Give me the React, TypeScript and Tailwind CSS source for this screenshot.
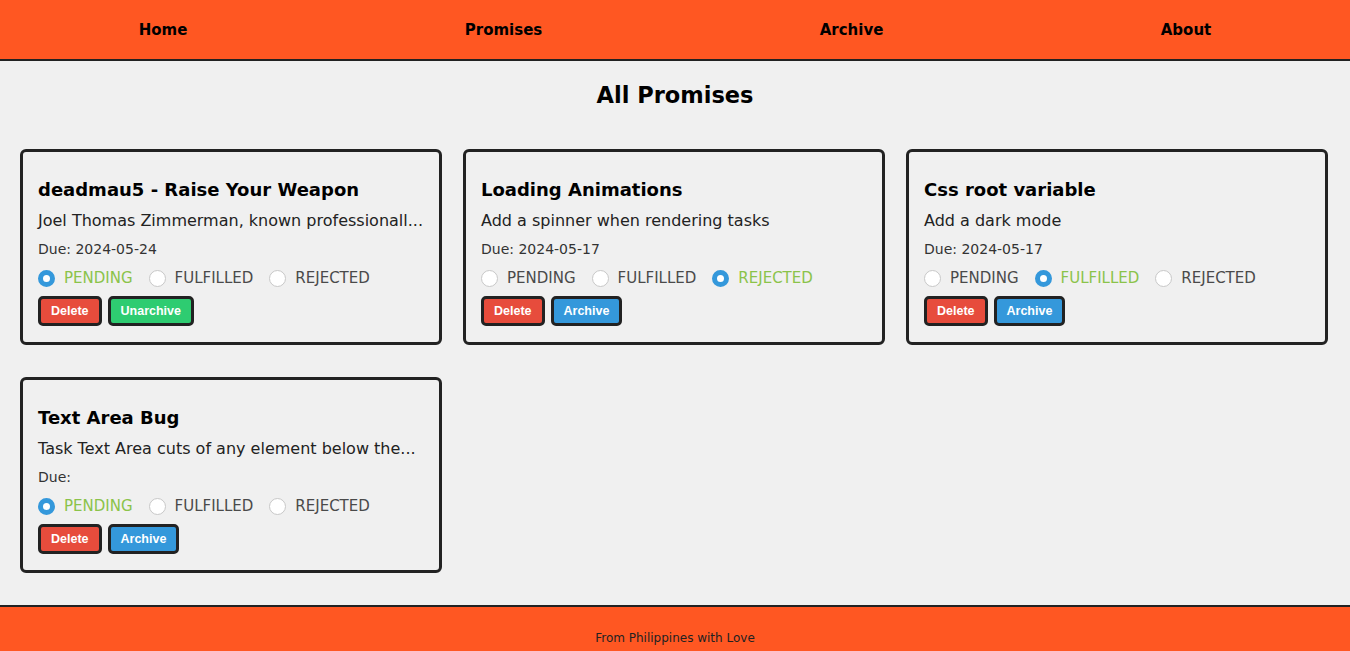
type Status = "PENDING" | "FULFILLED" | "REJECTED";

type Promise = {
    title: string;
    description: string;
    due: string;
    status: Status;
    archived: boolean;
};

const promises: Promise[] = [
    {
        title: "deadmau5 - Raise Your Weapon",
        description: "Joel Thomas Zimmerman, known professionall...",
        due: "2024-05-24",
        status: "PENDING",
        archived: true,
    },
    {
        title: "Loading Animations",
        description: "Add a spinner when rendering tasks",
        due: "2024-05-17",
        status: "REJECTED",
        archived: false,
    },
    {
        title: "Css root variable",
        description: "Add a dark mode",
        due: "2024-05-17",
        status: "FULFILLED",
        archived: false,
    },
    {
        title: "Text Area Bug",
        description: "Task Text Area cuts of any element below the...",
        due: "",
        status: "PENDING",
        archived: false,
    },
];

const statuses: Status[] = ["PENDING", "FULFILLED", "REJECTED"];

function Radio({ label, checked }: { label: Status; checked: boolean }) {
    return (
        <label className="flex items-center gap-[9px]">
            {checked ? (
                <span className="h-[17px] w-[17px] rounded-full border-[5px] border-[#3498db] bg-white" />
            ) : (
                <span className="h-[17px] w-[17px] rounded-full border border-[#c8c8c8] bg-white" />
            )}
            <span className={checked ? "text-[#8bc34a]" : "text-[#4a4a4a]"}>
                {label}
            </span>
        </label>
    );
}

function PromiseCard({ item }: { item: Promise }) {
    return (
        <div className="rounded-[6px] border-[3px] border-[#222] px-[15px] pb-[16px] pt-[23px]">
            <h2 className="text-[18px] font-bold leading-[30px] text-black">
                {item.title}
            </h2>
            <p className="mt-[4px] text-[16px] leading-[24px] text-[#222]">
                {item.description}
            </p>
            <p className="mt-[6px] text-[14px] leading-[20px] text-[#333]">
                Due: {item.due}
            </p>
            <div className="mt-[9px] flex gap-[16px] text-[15px] leading-[20px]">
                {statuses.map((s) => (
                    <Radio key={s} label={s} checked={item.status === s} />
                ))}
            </div>
            <div className="mt-[8px] flex gap-[6px] font-['Liberation_Sans',sans-serif] text-[12.5px] font-bold text-white">
                <button className="h-[30px] rounded-[5px] border-[3px] border-[#222] bg-[#e74c3c] px-[10px]">
                    Delete
                </button>
                {item.archived ? (
                    <button className="h-[30px] rounded-[5px] border-[3px] border-[#222] bg-[#2ecc71] px-[10px]">
                        Unarchive
                    </button>
                ) : (
                    <button className="h-[30px] rounded-[5px] border-[3px] border-[#222] bg-[#3498db] px-[10px]">
                        Archive
                    </button>
                )}
            </div>
        </div>
    );
}

function App() {
    return (
        <div className="flex min-h-[651px] flex-col bg-[#f0f0f0] font-['DejaVu_Sans',sans-serif]">
            <nav className="flex h-[61px] items-center justify-around border-b-2 border-[#222] bg-[#ff5722] pt-[2px] text-[15px] font-bold text-black">
                <a>Home</a>
                <a>Promises</a>
                <a>Archive</a>
                <a>About</a>
            </nav>
            <main className="flex-1 px-[20px]">
                <h1 className="mt-[18px] text-center text-[22.5px] font-bold leading-[32px] text-black">
                    All Promises
                </h1>
                <div className="mt-[38px] grid grid-cols-3 gap-x-[21px] gap-y-[32px] pr-[2px]">
                    {promises.map((p) => (
                        <PromiseCard key={p.title} item={p} />
                    ))}
                </div>
            </main>
            <footer className="mt-[32px] flex h-[46px] items-end justify-center border-t-2 border-[#222] bg-[#ff5722] pb-[4px] text-[12px] text-[#222]">
                From Philippines with Love
            </footer>
        </div>
    );
}

export default App;
